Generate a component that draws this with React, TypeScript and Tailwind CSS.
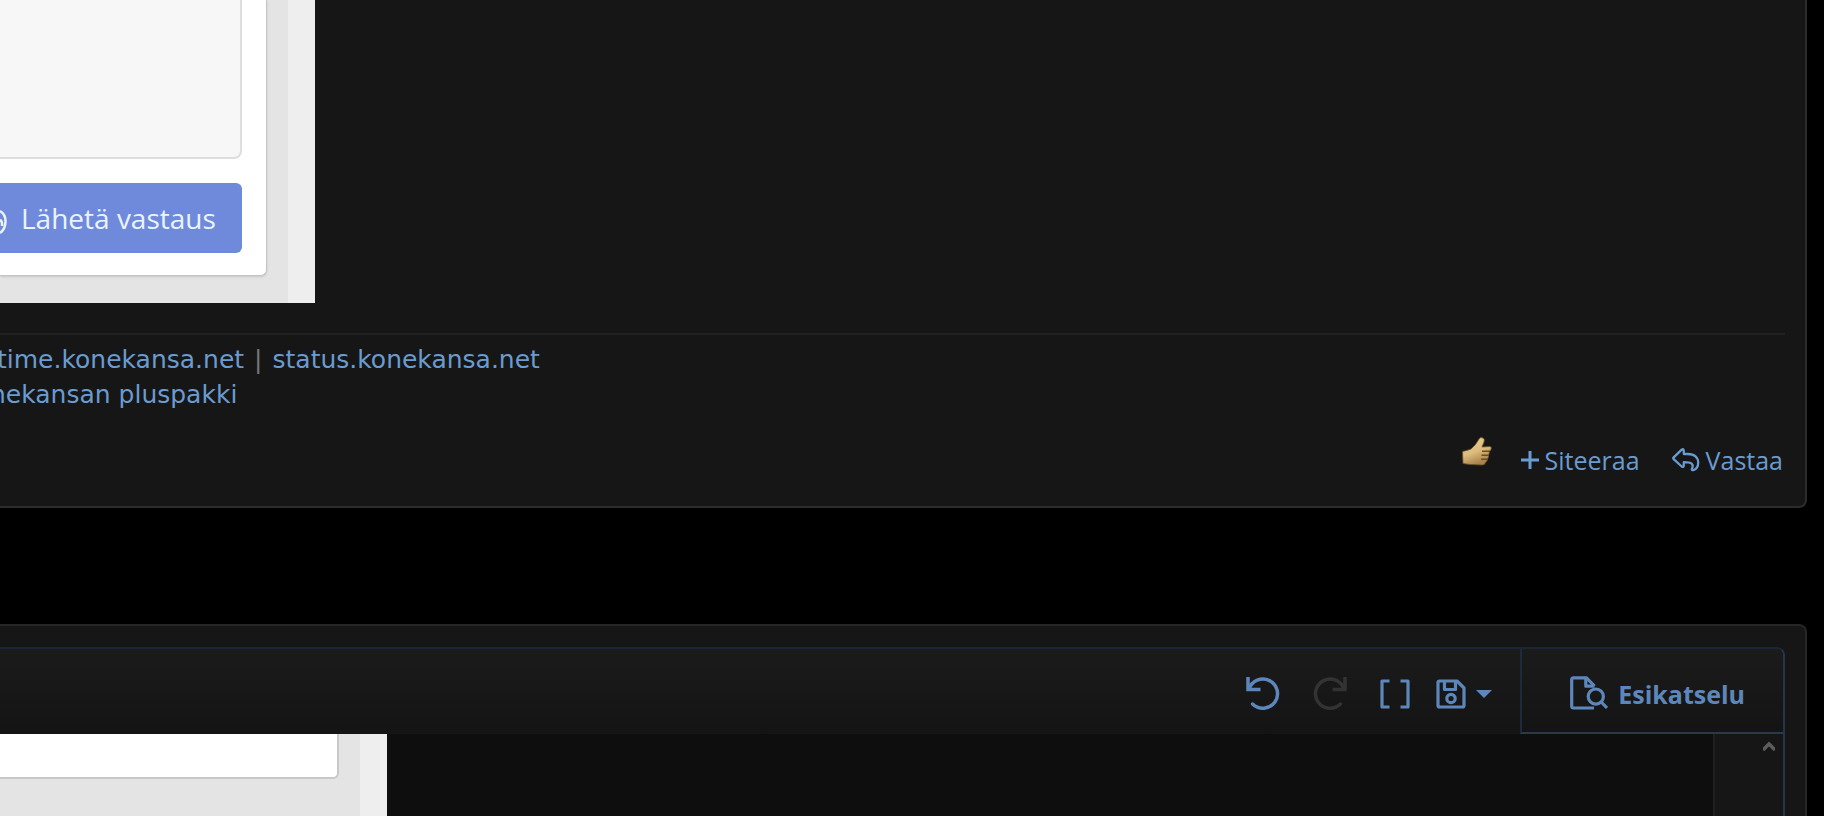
import type { ReactNode } from "react";

function IconUndo({ className = "" }: { className?: string }) {
  return (
    <svg
      viewBox="0 0 34 34"
      className={`h-[34px] w-[34px] ${className}`}
      fill="none"
      stroke="currentColor"
      strokeWidth="3.5"
      aria-hidden="true"
    >
      <path d="M2 0V12.5H14.5" />
      <path d="M3 12.3A14.6 14.6 0 1 1 6.6 27" strokeLinecap="round" />
    </svg>
  );
}

function IconBrackets() {
  return (
    <svg
      viewBox="0 0 30 30"
      className="h-[30px] w-[30px]"
      fill="none"
      stroke="currentColor"
      strokeWidth="3.2"
      strokeLinejoin="round"
      aria-hidden="true"
    >
      <path d="M9.5 2H2V28H9.5M20.5 2H28V28H20.5" />
    </svg>
  );
}

function IconSave() {
  return (
    <svg
      viewBox="0 0 30 30"
      className="h-[30px] w-[30px]"
      fill="none"
      stroke="currentColor"
      strokeWidth="3.2"
      strokeLinejoin="round"
      aria-hidden="true"
    >
      <path d="M3.5 2H21L28 9V26.5Q28 28 26.5 28H3.5Q2 28 2 26.5V3.5Q2 2 3.5 2Z" />
      <path d="M8.5 2V10.5H19.5V2" />
      <circle cx="15" cy="19.5" r="4.2" />
    </svg>
  );
}

function IconPreview() {
  return (
    <svg
      viewBox="0 0 38 34"
      className="h-[34px] w-[38px]"
      fill="none"
      stroke="currentColor"
      strokeWidth="3.2"
      strokeLinejoin="round"
      aria-hidden="true"
    >
      <path d="M24 32H3.5Q1.7 32 1.7 30V3.8Q1.7 1.8 3.5 1.8H16.5L24.5 10" />
      <path d="M15.8 2V10.2H24.5" />
      <circle cx="25.8" cy="20.6" r="7.6" />
      <path d="M31.2 26L37 32" />
    </svg>
  );
}

function IconReply() {
  return (
    <svg
      viewBox="0 0 28 24"
      className="h-6 w-7"
      fill="none"
      stroke="currentColor"
      strokeWidth="2.3"
      strokeLinejoin="round"
      aria-hidden="true"
    >
      <path d="M1.7 9.4L9.7 1.7Q11.6 .4 11.8 2.8V6H16C22.5 6 26.2 9.6 26.2 14.8C26.2 18.4 24.2 21 21.8 22C20 22.6 19.4 21.4 20.2 20C21 18.2 20.8 16.6 19.6 15.6C18.2 14.4 15.8 14.2 11.8 14.2V17.4Q11.6 19.8 9.7 18.5L1.7 11.2Q.8 10.3 1.7 9.4Z" />
    </svg>
  );
}

function IconThumb() {
  return (
    <svg viewBox="0 0 32 32" className="h-8 w-8" aria-hidden="true">
      <defs>
        <linearGradient id="thumb" x1="0" y1="0" x2=".4" y2="1">
          <stop offset="0" stopColor="#ecd08c" />
          <stop offset=".6" stopColor="#dcbb7c" />
          <stop offset="1" stopColor="#a9834a" />
        </linearGradient>
      </defs>
      <path
        d="M1.5 15.5Q6 14.5 10 13Q15 9 18 3Q19.5 .8 22 2Q24 3.2 23 6L21 11L29 10.5Q31 11 30 13.5Q29.5 15 28 15Q29 17 27.5 19Q28 21 26.5 23Q26.5 25 24.5 26.5Q24 29 21 29L9 28.5Q5 28 2 27.5Z"
        fill="url(#thumb)"
        stroke="#6b4f22"
        strokeWidth=".8"
      />
      <path
        d="M21 15.2H28M20.5 19.2H27.5M20 23.2H26.5"
        stroke="#6b4f22"
        strokeWidth="1.4"
      />
    </svg>
  );
}

// Screenshot of the reply form, attached to the post
function PostAttachment() {
  return (
    <figure className="w-[315px] border-r-[27px] border-[#eeeeee] bg-[#e4e4e4] pr-[21px] pb-[27px]">
      <div className="rounded-br-md border-r border-b border-[#c4c4c4] bg-white pr-6 pb-[22px] shadow-sm">
        <div className="h-[159px] rounded-br-lg border-r-2 border-b-2 border-[#dedede] bg-[#f7f7f7]" />
        <button
          type="button"
          className="mt-6 flex h-[70px] w-full items-center rounded-r-md bg-[#708adb] font-['Open_Sans','Noto_Sans',sans-serif] text-[28px] whitespace-nowrap text-[#eaf4ff]"
        >
          <svg
            viewBox="0 0 8 26"
            className="mt-2 mr-[13px] h-[26px] w-2 shrink-0"
            fill="none"
            stroke="currentColor"
            strokeWidth="2.5"
            aria-hidden="true"
          >
            <path d="M0 2Q5.5 5 5.5 12.5Q5.5 20 0 24M0 11Q2.5 12 2 17" />
          </svg>
          Lähetä vastaus
        </button>
      </div>
    </figure>
  );
}

function EditorAttachment() {
  return (
    <figure className="w-[387px] border-r-[27px] border-[#eeeeee] bg-[#e4e4e4] pr-[21px]">
      <div className="h-[45px] rounded-br-md border-r-2 border-b-2 border-[#c8c8c8] bg-white" />
    </figure>
  );
}

function ToolButton({
  label,
  disabled,
  children,
}: {
  label: string;
  disabled?: boolean;
  children: ReactNode;
}) {
  return (
    <button
      type="button"
      aria-label={label}
      disabled={disabled}
      className="flex items-center gap-2.5 disabled:text-[#333333]"
    >
      {children}
    </button>
  );
}

function Post() {
  return (
    <article className="rounded-br-lg border-r-2 border-b-2 border-[#2c2c2c] bg-[#161616] pr-5 pb-[22px]">
      <PostAttachment />

      <aside className="mt-[30px] overflow-hidden border-t-2 border-[#202020] pt-[7px] font-['DejaVu_Sans',sans-serif] text-[25px] leading-[35px] whitespace-nowrap text-[#6a9bd1]">
        <div className="-ml-[3px] flex gap-2.5">
          <a href="#uptime">time.konekansa.net</a>
          <span className="text-[#777777]">|</span>
          <a href="#status">status.konekansa.net</a>
        </div>
        <div className="-ml-2.5">
          <a href="#plus">nekansan pluspakki</a>
        </div>
      </aside>

      <footer className="mt-6 flex items-center justify-end pr-0.5 font-['Open_Sans','Noto_Sans',sans-serif] text-[25px] leading-[44px] text-[#6a9bd1]">
        <button type="button" aria-label="Tykkää" className="mr-7 mb-4">
          <IconThumb />
        </button>
        <a href="#quote" className="mr-8 flex items-center gap-1.5">
          <svg
            viewBox="0 0 18 18"
            className="h-[18px] w-[18px]"
            stroke="currentColor"
            strokeWidth="3"
            aria-hidden="true"
          >
            <path d="M9 0V18M0 9H18" />
          </svg>
          Siteeraa
        </a>
        <a href="#reply" className="flex items-center gap-1.5">
          <IconReply />
          Vastaa
        </a>
      </footer>
    </article>
  );
}

function ReplyEditor() {
  return (
    <section className="flex flex-1 flex-col rounded-tr-lg border-t-2 border-r-2 border-[#262626] bg-[#161616] pt-[21px] pr-5">
      <div className="flex flex-1 flex-col rounded-tr-lg border-t-2 border-r-2 border-t-[#1a2836] border-r-[#26354b]">
        <div className="flex h-[85px] justify-end rounded-tr-md bg-linear-to-b from-[#1b1b1b] to-[#141414] text-[#5d87bb]">
          <div className="flex items-center gap-[26px] pt-1 pr-7">
            <div className="flex items-center gap-[33px]">
              <ToolButton label="Kumoa">
                <IconUndo />
              </ToolButton>
              <ToolButton label="Tee uudelleen" disabled>
                <IconUndo className="-scale-x-100" />
              </ToolButton>
              <ToolButton label="BB-koodi">
                <IconBrackets />
              </ToolButton>
            </div>
            <ToolButton label="Luonnokset">
              <IconSave />
              <svg viewBox="0 0 16 8" className="h-2 w-4" fill="currentColor">
                <path d="M0 0H16L8 8Z" />
              </svg>
            </ToolButton>
          </div>
          <button
            type="button"
            className="flex items-center gap-2.5 border-b-2 border-l-2 border-b-[#2b394c] border-l-[#1d2a3b] pt-1 pr-[38px] pl-12 font-['Open_Sans','Noto_Sans',sans-serif] text-[25px] font-bold"
          >
            <IconPreview />
            <span className="pt-1">Esikatselu</span>
          </button>
        </div>

        <div className="flex flex-1 justify-between bg-[#0e0e0e]">
          <EditorAttachment />
          <div className="flex w-[70px] items-start justify-end border-l-2 border-[#202020] bg-[#161616] pt-[7px] pr-2">
            <button type="button" aria-label="Vieritä ylös">
              <svg
                viewBox="0 0 12 10"
                className="h-2.5 w-3"
                fill="none"
                stroke="#5c5c5c"
                strokeWidth="3.5"
              >
                <path d="M0 9L6 3L12 9" />
              </svg>
            </button>
          </div>
        </div>
      </div>
    </section>
  );
}

export default function App() {
  return (
    <main className="flex min-h-screen flex-col gap-[116px] bg-black pr-[17px]">
      <Post />
      <ReplyEditor />
    </main>
  );
}
